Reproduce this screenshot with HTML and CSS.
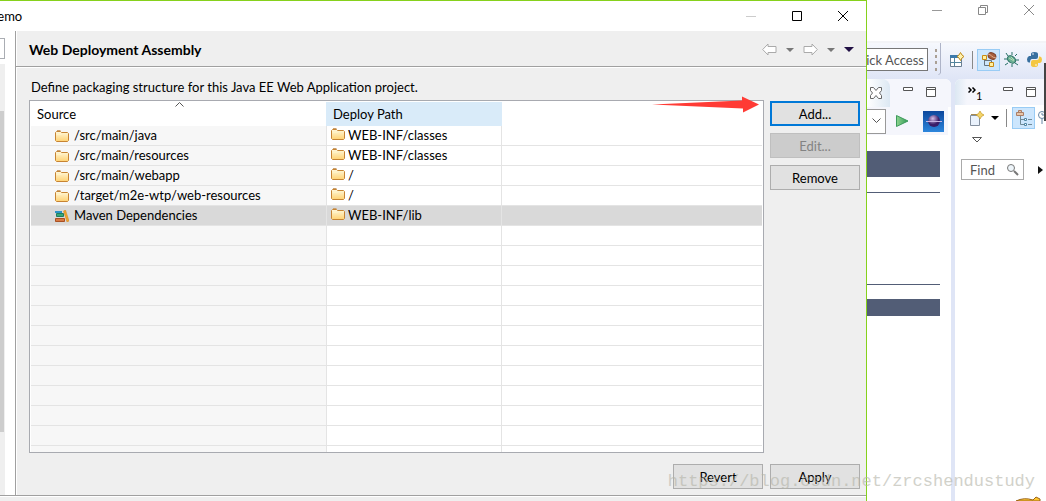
FILE: index.html
```
<!DOCTYPE html>
<html lang="en">
<head>
<meta charset="utf-8">
<title>Web Deployment Assembly</title>
<link rel="stylesheet" href="styles.css">
</head>
<body>
<svg class="defs" aria-hidden="true">
  <defs>
    <linearGradient id="gold" x1="0" y1="0" x2="0" y2="1"><stop offset="0" stop-color="#fff8dc"/><stop offset="1" stop-color="#ffd272"/></linearGradient>
    <linearGradient id="leaf" x1="0" y1="0" x2="1" y2="0"><stop offset="0" stop-color="#8fd48f"/><stop offset="1" stop-color="#2f9a55"/></linearGradient>
    <linearGradient id="sky" x1="0" y1="0" x2="0" y2="1"><stop offset="0" stop-color="#0d479c"/><stop offset="1" stop-color="#2d86dc"/></linearGradient>
    <radialGradient id="orb" cx=".4" cy=".3"><stop offset="0" stop-color="#d4bfe8"/><stop offset="1" stop-color="#3a1d68"/></radialGradient>
    <symbol id="folder" viewBox="0 0 14 12">
      <path d="M.5 10.500v-8l1-1h4l1 1h6l1 1v7l-1 1h-11z" fill="url(#gold)" stroke="#c78433"/>
      <path d="M1.500 4.500h5l1-1h5" fill="none" stroke="#fff3c4"/>
      <path d="M2 .5h3.500" stroke="#c9a070"/>
    </symbol>
    <symbol id="min" viewBox="0 0 10 4"><path d="M.5.500h9v3h-9z" fill="#fff" stroke="#555"/></symbol>
    <symbol id="max" viewBox="0 0 10 10"><path d="M.5.500h9v9h-9zM.5 2.500h9" fill="#fff" stroke="#555"/></symbol>
    <symbol id="down" viewBox="0 0 8 4"><path d="M0 0h8L4 4z" fill="currentColor"/></symbol>
  </defs>
</svg>
<main class="screen">
  <section class="dialog">
    <header class="titlebar">
      <span class="caption">demo</span>
      <span class="window-buttons">
        <button aria-label="Minimize" disabled><svg width="10" height="11"><path d="M0 5.500h10" stroke="#ccc"/></svg></button>
        <button aria-label="Maximize"><svg width="10" height="11"><path d="M.5.500h9v9h-9z" fill="none" stroke="#000"/></svg></button>
        <button aria-label="Close"><svg width="10" height="11"><path d="M0 0l10 10M10 0l-10 10" stroke="#000"/></svg></button>
      </span>
    </header>
    <div class="dialog-body">
      <aside class="sidebar"><input class="filter" aria-label="Filter"><div class="scroll"><div class="thumb"></div></div></aside>
      <div class="page">
        <header class="page-head">
          <h1>Web Deployment Assembly</h1>
          <nav class="history">
            <button aria-label="Back"><svg width="15" height="13"><path d="M.7 6.500l5.300-5.500v2.500h8v6H6V12z" fill="#fff" stroke="#aaa"/></svg></button>
            <button class="grey" aria-label="Back history"><svg width="8" height="4"><use href="#down"/></svg></button>
            <button aria-label="Forward"><svg width="15" height="13"><path d="M14.300 6.500L9 1v2.500H1v6h8V12z" fill="#fff" stroke="#aaa"/></svg></button>
            <button class="grey" aria-label="Forward history"><svg width="8" height="4"><use href="#down"/></svg></button>
            <button class="dark" aria-label="Menu"><svg width="10" height="5" viewBox="0 0 8 4"><use href="#down"/></svg></button>
          </nav>
        </header>
        <div class="page-body">
          <p class="intro">Define packaging structure for this Java EE Web Application project.</p>
          <div class="mapping">
            <div class="table-wrap">
              <div class="table-box">
                <table>
                  <thead><tr><th class="source">Source<svg class="sort" width="9" height="5"><path d="M.5 4.500l4-4 4 4" fill="none" stroke="#555"/></svg></th><th class="deploy">Deploy Path</th><th></th></tr></thead>
                  <tbody>
                    <tr><td><span class="cell"><svg width="14" height="12"><use href="#folder"/></svg>/src/main/java</span></td><td><span class="cell"><svg width="14" height="12"><use href="#folder"/></svg>WEB-INF/classes</span></td><td></td></tr>
                    <tr><td><span class="cell"><svg width="14" height="12"><use href="#folder"/></svg>/src/main/resources</span></td><td><span class="cell"><svg width="14" height="12"><use href="#folder"/></svg>WEB-INF/classes</span></td><td></td></tr>
                    <tr><td><span class="cell"><svg width="14" height="12"><use href="#folder"/></svg>/src/main/webapp</span></td><td><span class="cell"><svg width="14" height="12"><use href="#folder"/></svg>/</span></td><td></td></tr>
                    <tr><td><span class="cell"><svg width="14" height="12"><use href="#folder"/></svg>/target/m2e-wtp/web-resources</span></td><td><span class="cell"><svg width="14" height="12"><use href="#folder"/></svg>/</span></td><td></td></tr>
                    <tr class="selected"><td><span class="cell"><svg width="14" height="12" viewBox="0 0 14 12"><path d="M0 1h7v2H0z" fill="#2d94c8"/><path d="M1.500 3.500h7v3h-7z" fill="#37a878" stroke="#207c60"/><path d="M.5 8.500h9v3h-9z" fill="#d87942" stroke="#a95023"/><path d="M8.500 1l2-1 3.500 11-2 1z" fill="#f1a52e" stroke="#d38620" stroke-width=".5"/></svg>Maven Dependencies</span></td><td><span class="cell"><svg width="14" height="12"><use href="#folder"/></svg>WEB-INF/lib</span></td><td></td></tr>
                    <tr><td></td><td></td><td></td></tr>
                    <tr><td></td><td></td><td></td></tr>
                    <tr><td></td><td></td><td></td></tr>
                    <tr><td></td><td></td><td></td></tr>
                    <tr><td></td><td></td><td></td></tr>
                    <tr><td></td><td></td><td></td></tr>
                    <tr><td></td><td></td><td></td></tr>
                    <tr><td></td><td></td><td></td></tr>
                    <tr><td></td><td></td><td></td></tr>
                    <tr><td></td><td></td><td></td></tr>
                    <tr><td></td><td></td><td></td></tr>
                    <tr><td></td><td></td><td></td></tr>
                  </tbody>
                </table>
              </div>
              <svg class="arrow" width="108" height="18" viewBox="0 0 108 18"><path d="M0 8.500L90 4.500V0.500L107 8.500 91 16.500V12.500z" fill="#ff3b35"/></svg>
            </div>
            <div class="actions"><button class="btn primary">Add...</button><button class="btn" disabled>Edit...</button><button class="btn">Remove</button></div>
          </div>
          <footer class="page-foot"><button class="btn">Revert</button><button class="btn">Apply</button></footer>
        </div>
      </div>
    </div>
    <div class="dialog-foot"></div>
  </section>

  <section class="ide">
    <header class="ide-title">
      <button aria-label="Minimize window"><svg width="10" height="11"><path d="M0 5.500h10" stroke="#999"/></svg></button>
      <button aria-label="Restore window"><svg width="10" height="11"><path d="M.5 2.500h7v7h-7zM2.500 2V.5h7v7H8" fill="none" stroke="#888"/></svg></button>
      <button aria-label="Close window"><svg width="10" height="11"><path d="M0 0l10 10M10 0l-10 10" stroke="#888"/></svg></button>
    </header>
    <div class="toolbar">
      <div class="quick"><input value="Quick Access" aria-label="Quick Access"></div>
      <svg width="7" height="33"><path d="M1 6h2v3H1zM1 12h2v3H1zM1 18h2v3H1zM1 25h2v3H1z" fill="#aaa095"/><path d="M6.500 0v30l-2 2" fill="none" stroke="#aeb4c8"/></svg>
      <button aria-label="Open Perspective"><svg width="15" height="15"><path d="M1.500 3.500h11v11h-11z" fill="#fff" stroke="#6a7f92"/><path d="M1 3h9v3H1z" fill="#3d7aab"/><path d="M1 10.500h11M5.500 6v8" stroke="#54859d"/><path d="M11.500.5L13 3l2 1.500L13 6l-1.500 2.500L10 6 8 4.500 10 3z" fill="#fff2b0" stroke="#c18c1c"/></svg></button>
      <span class="rule"></span>
      <button class="active" aria-label="Java EE perspective"><svg width="16" height="16"><path d="M3.500 7v6.500H8M4 8.500h6.500V11" fill="none" stroke="#657480"/><path d="M1.500 3.500h4v4h-4zM8.500 10.500h4v4h-4z" fill="#fff0a0" stroke="#c98b13"/><ellipse cx="11" cy="4" rx="4" ry="3" fill="#a9603e" stroke="#7f4128" transform="rotate(25 11 4)"/><path d="M7 2c3 0 4 4 8 4" fill="none" stroke="#e0b090"/></svg></button>
      <button aria-label="Debug perspective"><svg width="15" height="15"><path d="M4 4L2 1M8 3V0M11 4l2-2M3 7H0M12 8h3M4 11l-3 2M8 12v3M11 11l3 2" stroke="#287168" fill="none"/><ellipse cx="7.500" cy="7.500" rx="4.500" ry="3.200" fill="#6aae94" stroke="#286e60" transform="rotate(35 7.500 7.500)"/><path d="M5 6l5 3M7 5l3 3" stroke="#b5ddb5"/></svg></button>
      <button aria-label="Python perspective"><svg width="15" height="15"><path d="M4 4V2q0-2 3.500-2T11 2v3q0 2-2 2H5Q3 7 3 10.500H2Q0 10 0 7.500T2 4h5z" fill="#376f9f"/><path d="M11 11v2q0 2-3.500 2T4 13v-3q0-2 2-2h4q2 0 2-3.500h1q2 .5 2 3T13 11H8z" fill="#f4c742"/><circle cx="6" cy="2" r=".8" fill="#fff"/><circle cx="9" cy="13" r=".8" fill="#fff"/></svg></button>
    </div>
    <div class="panes">
      <section class="editor">
        <header class="tabs">
          <button class="tab" aria-label="Close tab"><svg width="12" height="12"><path d="M.5.500h3l2.500 3 2.500-3h3v3l-2 2.500 2 2.500v3h-3L6 8.500l-2.500 3h-3v-3l2-2.500-2-2.500z" fill="#fff" stroke="#666"/></svg></button>
          <span class="pane-buttons"><button aria-label="Minimize editor"><svg width="10" height="4"><use href="#min"/></svg></button><button aria-label="Maximize editor"><svg width="10" height="10"><use href="#max"/></svg></button></span>
        </header>
        <div class="address">
          <button class="drop" aria-label="Address list"><svg width="9" height="6"><path d="M.5.500l4 4 4-4" fill="none" stroke="#555"/></svg></button>
          <button aria-label="Go"><svg width="13" height="12"><path d="M.5.500L12 6 .5 11.500z" fill="url(#leaf)" stroke="#3c9a5c"/></svg></button>
          <button class="browser" aria-label="Open browser"><svg width="21" height="21"><path d="M0 0h21v21H0z" fill="url(#sky)"/><circle cx="11" cy="10" r="6" fill="url(#orb)"/><path d="M3 10.500h16" stroke="#c6b2e2"/></svg></button>
        </div>
        <div class="document"><div class="band"></div><hr><div class="space"></div><hr><div class="band small"></div></div>
      </section>
      <section class="outline">
        <header class="outline-tabs"><button class="more" aria-label="More views"><svg width="8" height="6"><path d="M.5.500L3 3 .5 5.500M4.500.5L7 3 4.500 5.500" fill="none" stroke="#000" stroke-width="1.500"/></svg><span>1</span></button><span class="pane-buttons"><button aria-label="Minimize outline"><svg width="10" height="4"><use href="#min"/></svg></button><button aria-label="Maximize outline"><svg width="10" height="10"><use href="#max"/></svg></button></span></header>
        <div class="outline-tools">
          <button aria-label="New task"><svg width="14" height="15"><path d="M.5 4.500h9v10h-9z" fill="#eaf2fc" stroke="#84909f"/><path d="M1 3.500h7" stroke="#a88b50"/><path d="M10 0l1.500 2.500L14 4l-2.500 1.500L10 8 8.500 5.500 6 4l2.500-1.500z" fill="#f3d468" stroke="#c69a25" stroke-width=".7"/></svg></button>
          <button class="black" aria-label="New task menu"><svg width="8" height="4"><use href="#down"/></svg></button>
          <span class="rule"></span>
          <button class="active" aria-label="Categorized"><svg width="16" height="16"><path d="M4.500 6v8.500H8M4 9.500h4M12 9.500h4M12 14.500h4" fill="none" stroke="#6f8a98"/><path d="M.5 2.500h7v3h-7zM2.500 2V.5h3V2" fill="#e6c6aa" stroke="#aa7e67"/><path d="M8.500 8.500h2v2h-2zM8.500 13.500h2v2h-2z" fill="#fff" stroke="#4f86a4"/></svg></button>
          <button class="cut" aria-label="Scheduled"><svg width="12" height="14"><circle cx="5" cy="4" r="3.500" fill="#fff" stroke="#6687a5"/><path d="M5 2v2h2M5 8v5" fill="none" stroke="#6687a5"/></svg></button>
        </div>
        <button class="view-menu" aria-label="View menu"><svg width="10" height="6"><path d="M.5.500h9L5 5z" fill="#fff" stroke="#555"/></svg></button>
        <div class="find-row"><label class="find"><input value="Find" aria-label="Find"><svg width="12" height="12"><circle cx="4" cy="4" r="3.500" fill="#eef5fa" stroke="#777"/><path d="M7 7l4 4" stroke="#777" stroke-width="2"/></svg></label><button aria-label="More"><svg width="5" height="8"><path d="M0 0l5 4-5 4z" fill="#111"/></svg></button></div>
        <svg class="mascot" width="25" height="5"><path d="M0 5Q8 1 17 4l3-3 4 2v2z" fill="#ffc62d" stroke="#9a641b"/></svg>
      </section>
    </div>
    <div class="edge"></div>
  </section>
  <div class="watermark">https://blog.csdn.net/zrcshendustudy</div>
</main>
</body>
</html>
```
FILE: styles.css
```
* { box-sizing: border-box; }
body { margin: 0; font: 13px/20px Lato, "Noto Sans", sans-serif; color: #000; background: #fff; }
button, input { font: inherit; color: inherit; }
button { display: flex; align-items: center; justify-content: center; padding: 0; border: 0; background: none; }
svg { display: block; flex: none; }
.defs { position: absolute; width: 0; height: 0; }
.screen { position: relative; display: flex; height: 100vh; overflow: hidden; }

.dialog { flex: 1; min-width: 0; display: flex; flex-direction: column; border-top: 1px solid #86d11c; border-right: 1px solid #86d11c; }
.titlebar { height: 30px; flex: none; display: flex; align-items: center; justify-content: space-between; overflow: hidden; }
.caption { margin-left: -10px; }
.window-buttons { display: flex; gap: 36px; padding-right: 18px; }
.dialog-body { flex: 1; min-height: 0; display: flex; }
.sidebar { width: 15px; flex: none; padding-top: 7px; display: flex; flex-direction: column; gap: 5px; }
.filter { width: 5px; height: 21px; padding: 0; border: 1px solid #aaadb3; border-left: 0; background: #fff; }
.scroll { width: 5px; flex: 1; padding-top: 47px; background: #efefef; }
.thumb { width: 4px; height: 321px; background: #cdcdcd; }
.page { flex: 1; min-width: 0; display: flex; flex-direction: column; border-left: 1px solid #a0a0a0; box-shadow: inset 1px 0 #fff; background: #efefef; }
.page-head { height: 36px; flex: none; display: flex; align-items: center; justify-content: space-between; padding: 2px 12px 0 13px; border-bottom: 1px solid #a0a0a0; box-shadow: 0 1px #fff; }
h1 { margin: 0; font-size: 14px; font-weight: bold; line-height: 20px; }
.history { display: flex; align-items: center; gap: 9px; }
.grey { color: #777; }
.dark { color: #211044; }
.black { color: #000; }
.page-body { flex: 1; min-height: 0; display: flex; flex-direction: column; padding: 10px 6px 5px 13px; }
.intro { margin: 0 0 3px 2px; white-space: nowrap; }
.mapping { flex: 1; min-height: 0; display: flex; gap: 6px; }
.table-wrap { position: relative; flex: 1; min-width: 0; display: flex; }
.table-box { flex: 1; min-width: 0; padding: 1px; overflow: hidden; border: 1px solid #a8aab0; background: #fff; }
table { width: 100%; table-layout: fixed; border-collapse: separate; border-spacing: 0; }
th { position: relative; height: 24px; padding: 0 6px; text-align: left; font-weight: normal; }
.source { width: 296px; border-right: 1px solid #d9ebf9; }
.deploy { width: 175px; background: #d9ebf9; }
.sort { position: absolute; left: 144px; top: 0; }
td { height: 20px; padding: 0; border-bottom: 1px solid #e4e4e4; border-right: 1px solid #e4e4e4; line-height: 19px; }
td:first-child { padding-left: 24px; background: #f7f7f7; }
td:nth-child(2) { padding-left: 4px; }
td:last-child { border-right: 0; }
.selected td, .selected td:first-child { background: #d9d9d9; }
.cell { display: flex; align-items: center; gap: 5px; white-space: nowrap; }
td:nth-child(2) .cell { gap: 3px; }
td:nth-child(2) svg { margin-bottom: 4px; }
.arrow { position: absolute; right: 4px; top: -4px; }
.actions { width: 90px; flex: none; display: flex; flex-direction: column; gap: 7px; padding-top: 1px; }
.btn { width: 90px; height: 25px; border: 1px solid #adadad; background: #e1e1e1; }
.btn:disabled { color: #838383; background: #ccc; border-color: #bfbfbf; }
.primary { border: 2px solid #0078d7; }
.page-foot { display: flex; justify-content: flex-end; gap: 7px; padding-top: 11px; padding-bottom: 1px; }
.dialog-foot { height: 6px; flex: none; border-top: 1px solid #a0a0a0; background: #efefef; box-shadow: inset 0 1px #fff; }

.ide { position: relative; width: 179px; flex: none; display: flex; flex-direction: column; overflow: hidden; }
.ide-title { height: 41px; flex: none; display: flex; align-items: flex-start; justify-content: flex-end; gap: 36px; padding: 5px 12px 0 0; }
.toolbar { height: 38px; flex: none; display: flex; align-items: center; gap: 4px; padding-bottom: 3px; border-top: 2px solid #f3f4f7; background: linear-gradient(#f6f8fd, #dfe5f6); }
.quick { width: 61px; display: flex; justify-content: flex-end; margin-right: 2px; }
.quick input { width: 94px; height: 23px; flex: none; padding: 0 3px; border: 1px solid #777; background: #fff; color: #555; text-align: right; }
.toolbar > button { width: 23px; height: 22px; flex: none; }
.rule { width: 1px; height: 18px; flex: none; background: #888; }
.toolbar > button + button { margin-left: -4px; }
.active { border: 1px solid #99ccf5; background: #cce6fd; }
.panes { flex: 1; min-height: 0; display: flex; gap: 4px; background: #dfe5f6; }
.editor { width: 84px; flex: none; display: flex; flex-direction: column; border-radius: 0 6px 0 0; background: #fff; overflow: hidden; }
.tabs { height: 28px; flex: none; display: flex; justify-content: space-between; padding-right: 15px; background: #f5f6fc; }
.tab { width: 23px; background: linear-gradient(90deg, #fff, #dce8f3); border-radius: 0 8px 0 0; padding-right: 5px; }
.pane-buttons { display: flex; align-items: flex-start; gap: 13px; padding-top: 8px; }
.address { height: 28px; width: 81px; flex: none; display: flex; align-items: center; gap: 10px; background: #f5f6fc; }
.drop { width: 19px; height: 25px; border: 1px solid #999; border-left: 0; background: #fff; }
.browser { margin-left: 4px; }
.document { padding: 16px 11px 0 0; }
.band { height: 26px; background: #525d76; }
.small { height: 17px; }
.document hr { height: 1px; margin: 15px 0 0; border: 0; background: #525d76; }
.document .space { height: 76px; }
.document .small { margin-top: 14px; }
.outline { flex: 1; min-width: 0; display: flex; flex-direction: column; align-items: flex-start; border-radius: 6px 0 0 0; background: #fff; overflow: hidden; }
.outline-tabs { width: 100%; height: 26px; flex: none; display: flex; justify-content: space-between; padding: 0 10px 0 13px; background: linear-gradient(90deg, #dce8f3, #f5f6fc 12px); }
.more { align-items: flex-start; padding-top: 8px; }
.more span { font-size: 11px; line-height: 18px; }
.outline-tools { height: 26px; flex: none; display: flex; align-items: center; gap: 7px; padding-left: 15px; }
.outline-tools .active { width: 23px; height: 22px; flex: none; margin-left: -2px; }
.outline-tools .cut { margin-left: -5px; }
.view-menu { height: 18px; margin-left: 17px; }
.find-row { display: flex; align-items: center; gap: 14px; padding: 10px 0 0 6px; }
.find { width: 63px; height: 21px; display: flex; align-items: center; border: 1px solid #aaa; padding: 0 4px 0 8px; }
.find input { flex: 1; width: 20px; min-width: 0; padding: 0; border: 0; background: none; color: #555; }
.mascot { margin: auto 5px 0 auto; }
.edge { position: absolute; right: 0; top: 63px; width: 2px; height: 58px; background: #444; }
.watermark { position: absolute; right: 11px; bottom: 9px; font: 17px/20px "Liberation Mono", monospace; color: #b4b4a8; opacity: .6; pointer-events: none; }
```
